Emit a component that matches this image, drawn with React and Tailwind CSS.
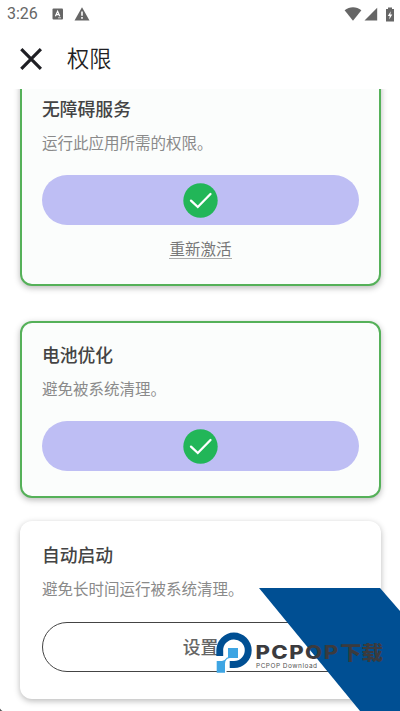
function StatusBar() {
    return (
        <div className="flex h-7 items-center justify-between pl-[7px] pr-[5px] text-[#666]">
            <div className="flex items-center">
                <span className="w-[45px] font-[Roboto,sans-serif] text-[16px] leading-none">3:26</span>
                <svg className="h-[12px] w-[12px]" viewBox="0 0 12 12" fill="none">
                    <rect x="0.5" y="0.5" width="10.5" height="11" rx="1" fill="#666" />
                    <path d="M3.4 8.2 5.6 3.2 7.8 8.2M4.2 6.6H7" stroke="#fff" strokeWidth="1.2" />
                    <path d="M6 9.8h3" stroke="#fff" strokeWidth="0.7" />
                </svg>
                <svg className="ml-[10px] h-[14px] w-[16px]" viewBox="0 0 16 14">
                    <path d="M8 0.3 15.5 13.5H0.5Z" fill="#666" />
                    <path d="M8 4.6v4.2M8 10v1.8" stroke="#fff" strokeWidth="1.6" />
                </svg>
            </div>
            <div className="flex items-center">
                <svg className="h-[14px] w-[18px]" viewBox="0 0 18 14">
                    <path d="M0.6 3.2C5.5-0.7 12.5-0.7 17.4 3.2L9 13.7Z" fill="#666" />
                </svg>
                <svg className="ml-[2px] h-[14px] w-[14px]" viewBox="0 0 14 14">
                    <path d="M13.2 0.8V13.5H0.5Z" fill="#666" />
                </svg>
                <svg className="ml-[7px] h-[15px] w-[10px]" viewBox="0 0 10 15">
                    <path d="M3 0.5H7V2H9V14.5H1V2H3Z" fill="#666" />
                    <path d="M5.8 4.2 2.8 9H4.7L4.2 12.5 7.3 7.6H5.3Z" fill="#fff" />
                </svg>
            </div>
        </div>
    );
}

function Header() {
    return (
        <div className="flex h-[61px] items-center pl-5 text-[#1f1f24]">
            <svg className="h-[22px] w-[22px]" viewBox="0 0 22 22" fill="none">
                <path d="M1.3 1.2 20.9 20.8M20.9 1.2 1.3 20.8" stroke="currentColor" strokeWidth="3.2" />
            </svg>
            <h1 className="mb-0.5 ml-[25px] text-[22.2px] leading-none font-[350]">权限</h1>
        </div>
    );
}

function DoneButton() {
    return (
        <button className="mt-[21px] flex h-[50px] w-full items-center justify-center rounded-full bg-[#bebef4]">
            <svg className="h-[35px] w-[35px]" viewBox="0 0 35 35" fill="none">
                <circle cx="17.5" cy="17.5" r="17.2" fill="#22b658" />
                <path
                    d="M8 17.6 14.8 24 27.5 11"
                    stroke="#fff"
                    strokeWidth="2.3"
                    strokeLinecap="round"
                />
            </svg>
        </button>
    );
}

function PermissionCard({ title, text, done, children }) {
    const look = done
        ? "border-[#55b159] bg-[#fbfdfc]"
        : "border-transparent bg-white bg-clip-border";

    return (
        <section
            className={`w-[361px] shrink-0 rounded-[12px] border-2 px-5 pt-[19px] shadow-[0_2px_6px_rgba(0,0,0,0.28)] ${look}`}
        >
            <h2 className="text-[17.8px] leading-6 font-medium text-[#444]">{title}</h2>
            <p className="mt-[10px] text-[15.5px] leading-6 text-[#8a8a8a]">{text}</p>
            {children}
        </section>
    );
}

function Watermark() {
    return (
        <svg className="absolute right-0 bottom-0 h-[123px] w-[190px]" viewBox="210 588 190 123">
            <path d="M259 588H380L400 611V711H360Z" fill="#004f93" />

            {/* P mark */}
            <path d="M223 656V650.5A11 11 0 1 1 234 661.5H230V668L225 673V656Z" fill="#fff" />
            <path d="M216.3 656V650.5A17.7 17.7 0 1 1 234 668H229.7V661H234A10.8 10.8 0 1 0 223.2 651V656Z" fill="#004f93" />
            <path d="M228 648H238V658H230Q225 658.5 225 664V672.7H216.7V661H222Q225.5 660 227 657.5H228Z" fill="#3ea5e3" />

            <g fill="#3b3b3e">
                <text
                    x="255.5"
                    y="659"
                    textLength="84"
                    lengthAdjust="spacingAndGlyphs"
                    className="font-[Inter,sans-serif] text-[18.5px] font-extrabold tracking-[1.2px]"
                >
                    PCPOP
                </text>
                <text
                    x="340"
                    y="660"
                    textLength="43"
                    lengthAdjust="spacingAndGlyphs"
                    className="text-[19px] font-black"
                >
                    下载
                </text>
                <text
                    x="256"
                    y="668"
                    textLength="61"
                    className="font-[Inter,sans-serif] text-[6.5px]"
                    fill="#555"
                >
                    PCPOP Download
                </text>
            </g>
        </svg>
    );
}

export default function App() {
    return (
        <div className="relative flex h-[711px] w-[400px] flex-col overflow-hidden bg-white font-['Noto_Sans_CJK_SC',sans-serif]">
            <StatusBar />
            <Header />

            {/* Scrolled list, the first card is cut by the header */}
            <main className="flex min-h-0 flex-1 flex-col overflow-hidden pl-5">
                <div className="-mt-[14px] flex flex-col">
                    <PermissionCard title="无障碍服务" text="运行此应用所需的权限。" done>
                        <DoneButton />
                        <div className="mt-[13px] mb-[25px] flex justify-center">
                            <a className="border-b border-[#aaa] text-[15.5px] leading-5 text-[#777]">重新激活</a>
                        </div>
                    </PermissionCard>

                    <div className="mt-[35px] flex">
                        <PermissionCard title="电池优化" text="避免被系统清理。" done>
                            <DoneButton />
                            <div className="h-[25px]" />
                        </PermissionCard>
                    </div>

                    <div className="mt-[23px] flex">
                        <PermissionCard title="自动启动" text="避免长时间运行被系统清理。">
                            <button className="mt-[22px] h-[50px] w-full rounded-full border border-[#444] pb-0.5 text-[17.8px] font-medium text-[#666]">
                                设置
                            </button>
                            <div className="h-[25px]" />
                        </PermissionCard>
                    </div>
                </div>
            </main>

            <Watermark />

            {/* Rounded screen corner */}
            <svg className="absolute bottom-0 left-0 h-[3px] w-[3px]" viewBox="0 0 3 3">
                <path d="M0 0.5Q1 2 2.5 3H0Z" fill="#555" />
            </svg>
        </div>
    );
}
